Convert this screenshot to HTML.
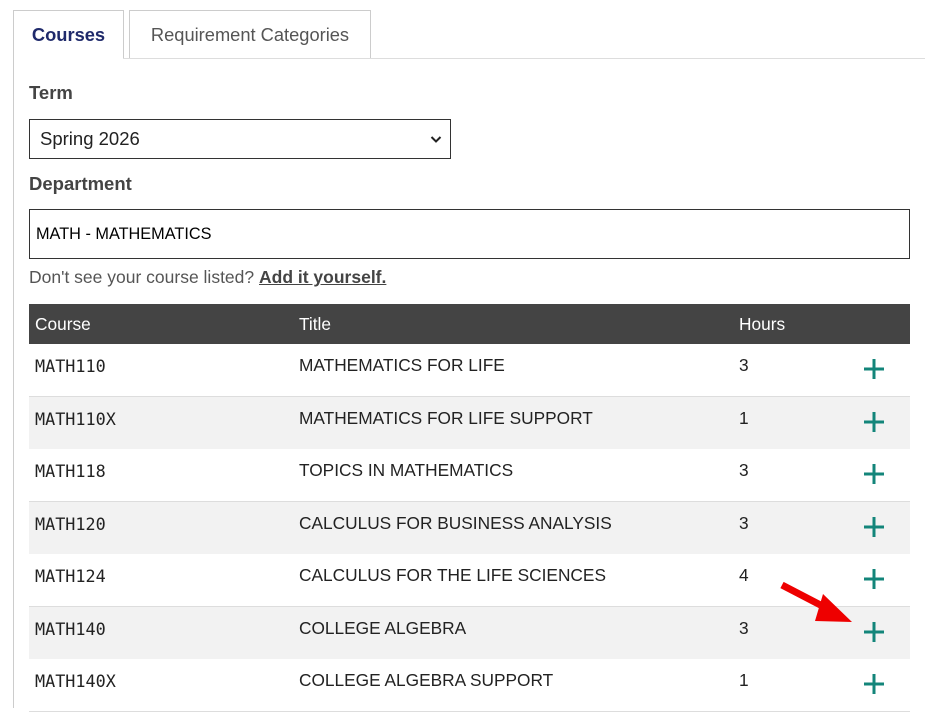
<!DOCTYPE html>
<html><head><style>
body{margin:0;width:925px;height:708px;overflow:hidden;background:#fff;font-family:"Liberation Sans",Arial,sans-serif;color:#222;position:relative}
.abs{position:absolute}
.tab{position:absolute;top:10px;height:48px;border:1px solid #ccc;border-bottom:none;box-sizing:border-box;font-size:18.3px;line-height:48px;text-align:center}
.row{position:absolute;left:29px;width:881px;height:52px;border-bottom:1px solid #ddd;font-size:17.3px}
.row span{position:absolute;top:11px}
.mono{font-family:"DejaVu Sans Mono",monospace;font-size:16.8px;left:6px;top:12px!important}
.plus{position:absolute;left:834px;top:14px}
</style></head><body>
<div class="abs" style="left:13px;top:58px;width:1px;height:650px;background:#ccc"></div>
<div class="abs" style="left:123px;top:58px;width:802px;height:1px;background:#ddd"></div>
<div class="tab" style="left:13px;width:111px;color:#1f2a6b;font-weight:bold;border-right:1px solid #ccc">Courses</div>
<div class="tab" style="left:129px;width:242px;color:#555">Requirement Categories</div>
<div class="abs" style="left:29px;top:82px;font-size:18.5px;font-weight:bold;color:#444">Term</div>
<div class="abs" style="left:29px;top:119px;width:422px;height:40px;border:1px solid #333;box-sizing:border-box;font-size:18.5px;line-height:38px;padding-left:10px;color:#222">Spring 2026
<svg class="abs" style="right:8px;top:15px" width="12" height="9" viewBox="0 0 12 9"><path d="M1.5 2l4.5 4.5 4.5-4.5" fill="none" stroke="#222" stroke-width="2"/></svg></div>
<div class="abs" style="left:29px;top:173px;font-size:18.5px;font-weight:bold;color:#444">Department</div>
<div class="abs" style="left:29px;top:209px;width:881px;height:50px;border:1px solid #333;box-sizing:border-box;font-size:16.3px;line-height:48px;padding-left:6px;color:#000">MATH - MATHEMATICS</div>
<div class="abs" style="left:29px;top:267px;font-size:17.5px;color:#555">Don't see your course listed? <b style="text-decoration:underline;color:#444">Add it yourself.</b></div>
<div class="abs" style="left:29px;top:304px;width:881px;height:40px;background:#444;color:#fff;font-size:17.3px">
<span class="abs" style="left:6px;top:10px">Course</span><span class="abs" style="left:270px;top:10px">Title</span><span class="abs" style="left:710px;top:10px">Hours</span></div>
<div class="row" style="top:344px;background:#fff"><span class="mono">MATH110</span><span style="left:270px">MATHEMATICS FOR LIFE</span><span style="left:710px">3</span><svg class="plus" width="22" height="22"><path d="M11 1v20M1 11h20" stroke="#13857a" stroke-width="3"/></svg></div>
<div class="row" style="top:397px;background:#f2f2f2"><span class="mono">MATH110X</span><span style="left:270px">MATHEMATICS FOR LIFE SUPPORT</span><span style="left:710px">1</span><svg class="plus" width="22" height="22"><path d="M11 1v20M1 11h20" stroke="#13857a" stroke-width="3"/></svg></div>
<div class="row" style="top:449px;background:#fff"><span class="mono">MATH118</span><span style="left:270px">TOPICS IN MATHEMATICS</span><span style="left:710px">3</span><svg class="plus" width="22" height="22"><path d="M11 1v20M1 11h20" stroke="#13857a" stroke-width="3"/></svg></div>
<div class="row" style="top:502px;background:#f2f2f2"><span class="mono">MATH120</span><span style="left:270px">CALCULUS FOR BUSINESS ANALYSIS</span><span style="left:710px">3</span><svg class="plus" width="22" height="22"><path d="M11 1v20M1 11h20" stroke="#13857a" stroke-width="3"/></svg></div>
<div class="row" style="top:554px;background:#fff"><span class="mono">MATH124</span><span style="left:270px">CALCULUS FOR THE LIFE SCIENCES</span><span style="left:710px">4</span><svg class="plus" width="22" height="22"><path d="M11 1v20M1 11h20" stroke="#13857a" stroke-width="3"/></svg></div>
<div class="row" style="top:607px;background:#f2f2f2"><span class="mono">MATH140</span><span style="left:270px">COLLEGE ALGEBRA</span><span style="left:710px">3</span><svg class="plus" width="22" height="22"><path d="M11 1v20M1 11h20" stroke="#13857a" stroke-width="3"/></svg></div>
<div class="row" style="top:659px;background:#fff"><span class="mono">MATH140X</span><span style="left:270px">COLLEGE ALGEBRA SUPPORT</span><span style="left:710px">1</span><svg class="plus" width="22" height="22"><path d="M11 1v20M1 11h20" stroke="#13857a" stroke-width="3"/></svg></div>
<svg class="abs" style="left:770px;top:575px" width="90" height="60"><path d="M12 10L62 36" stroke="#e00" stroke-width="7"/><path d="M53 19L82 47 45 46Z" fill="#e00"/></svg>
</body></html>
